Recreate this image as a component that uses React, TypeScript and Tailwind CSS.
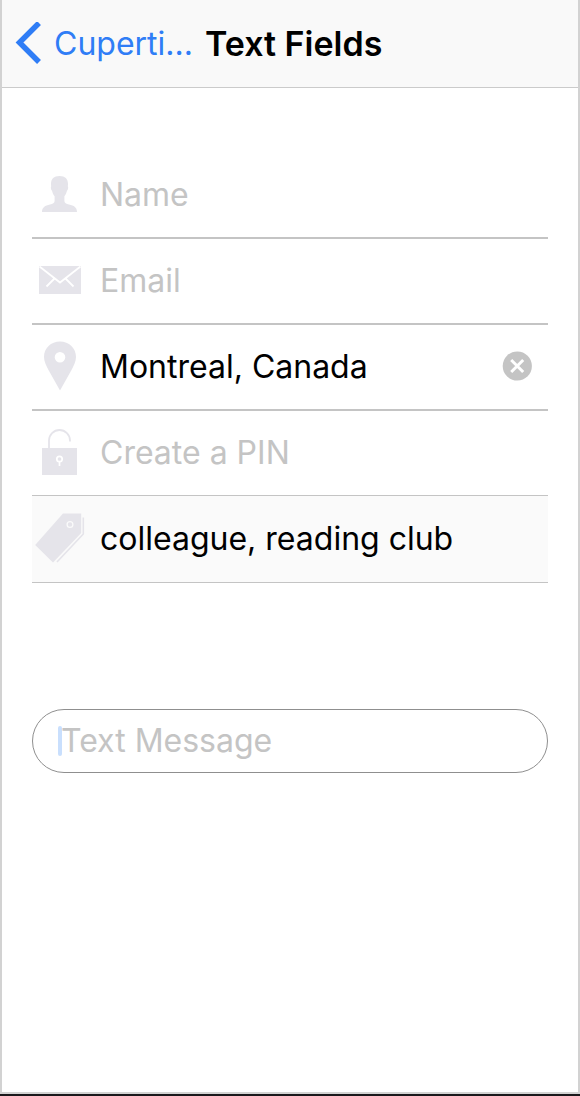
import { useState } from "react";
import type { ReactNode } from "react";

type FieldProps = {
  id: string;
  label: string;
  icon: ReactNode;
  initial?: string;
  clearable?: boolean;
  readOnly?: boolean;
  type?: string;
};

function PersonIcon() {
  return (
    <svg aria-hidden="true" viewBox="0 1 56 56" className="size-14 fill-[#e5e4ea]">
      <path d="M27.500 10c5.600 0 8.500 2.700 8.500 8 0 .800-.100 1.600-.200 2.200.700.700.400 3.300-.800 4.500-.700 2.500-1.500 4.200-2.600 5.600v4.600c0 2 1.800 3 4.600 3.600 5 .900 8 3 8 7.500H10c0-4.500 3-6.600 8-7.500 2.800-.600 4.600-1.600 4.600-3.600v-4.600c-1.100-1.400-1.900-3.100-2.600-5.600-1.200-1.200-1.500-3.800-.800-4.500-.100-.600-.200-1.400-.200-2.200 0-5.300 2.900-8 8.500-8z" />
    </svg>
  );
}

function MailIcon() {
  return (
    <svg aria-hidden="true" viewBox="0 1 56 56" className="size-14">
      <rect x="7" y="14" width="42" height="28" fill="#e5e4ea" />
      <path d="M7.500 14.500 28 30.500 48.500 14.500M14.500 34.500 22.500 26.500M41.500 34.500 33.500 26.500" fill="none" stroke="#fff" strokeWidth="1.800" />
    </svg>
  );
}

function PinIcon() {
  return (
    <svg aria-hidden="true" viewBox="0 1 56 56" className="size-14">
      <path
        fillRule="evenodd"
        fill="#e5e4ea"
        d="M28 3.500c9 0 16 6.700 16 15.500 0 4.500-2.200 8.800-4.500 13L28 52.500 16.500 32C14.200 27.800 12 23.500 12 19 12 10.200 19 3.500 28 3.500zm0 10.500a5.300 5.300 0 1 0 0 10.600 5.300 5.300 0 0 0 0-10.600z"
      />
    </svg>
  );
}

function LockIcon() {
  return (
    <svg aria-hidden="true" viewBox="0 2 56 56" className="size-14">
      <rect x="10" y="25" width="35" height="27" fill="#e5e4ea" />
      <path d="M17 25.500V17.500a10.500 10.500 0 0 1 21 0v1" fill="none" stroke="#e5e4ea" strokeWidth="1.800" />
      <circle cx="27.500" cy="36" r="2.700" fill="none" stroke="#fff" strokeWidth="1.700" />
      <path d="M27.500 38.500V43" stroke="#fff" strokeWidth="1.700" />
    </svg>
  );
}

function TagIcon() {
  return (
    <svg aria-hidden="true" viewBox="0 2 56 56" className="size-14">
      <path d="M31 4.500h18.200v19.500L21 53.500 3.200 36z" fill="#e5e4ea" />
      <circle cx="38" cy="15.500" r="2.900" fill="none" stroke="#fafafa" strokeWidth="1.300" />
      <path d="M51.300 8.500v16.500L25 53" fill="none" stroke="#e5e4ea" strokeWidth="1.600" />
    </svg>
  );
}

function Field({ id, label, icon, initial = "", clearable, readOnly, type = "text" }: FieldProps) {
  const [value, setValue] = useState(initial);
  return (
    <div className="flex h-full items-center">
      <label htmlFor={id} className="flex shrink-0">
        {icon}
      </label>
      <input
        id={id}
        aria-label={label}
        type={type}
        value={value}
        readOnly={readOnly}
        placeholder={label}
        onChange={(e) => setValue(e.target.value)}
        className="ml-3 h-12 min-w-0 flex-1 bg-transparent text-[32px] text-black outline-none placeholder:text-[#c4c4c4]"
      />
      {clearable && value !== "" && (
        <button type="button" aria-label={"Clear " + label} onClick={() => setValue("")} className="mr-4 shrink-0">
          <svg aria-hidden="true" viewBox="0 0 30 32" className="h-8 w-[30px]">
            <circle cx="15.300" cy="15" r="14.600" fill="#c4c4c4" />
            <path d="M9.200 9 21.200 21M21.200 9 9.200 21" stroke="#fff" strokeWidth="3" />
          </svg>
        </button>
      )}
    </div>
  );
}

export default function App() {
  const [message, setMessage] = useState("");
  return (
    <div className="flex min-h-screen flex-col border-b-2 border-[#1a181b] bg-white font-['Inter','Liberation_Sans',sans-serif]">
      <div className="flex flex-1 flex-col border-x-2 border-b-2 border-[#d2d2d2]">
        <header className="flex h-22 items-center border-b border-[#cbcbcb] bg-[#f9f9f9] pl-3">
          <a href="#cupertino" className="flex items-center text-[32px] text-[#2f7df6]">
            <svg aria-hidden="true" viewBox="0 2 28 44" className="mr-3 h-11 w-7">
              <path d="M25 3 5.500 22.500 25 42" fill="none" stroke="currentColor" strokeWidth="5.500" />
            </svg>
            Cuperti...
          </a>
          <h1 className="ml-3 text-[34px] font-semibold text-black">Text Fields</h1>
        </header>
        <main className="px-[30px] pt-16">
          <form onSubmit={(e) => e.preventDefault()}>
            <div className="h-[87px] border-b-2 border-[#c4c4c4]">
              <Field id="name" label="Name" icon={<PersonIcon />} />
            </div>
            <div className="h-[86px] border-b-2 border-[#c4c4c4]">
              <Field id="email" label="Email" type="email" icon={<MailIcon />} />
            </div>
            <div className="h-[86px] border-b-2 border-[#c4c4c4]">
              <Field id="location" label="Location" initial="Montreal, Canada" clearable icon={<PinIcon />} />
            </div>
            <div className="h-[85px] border-b border-[#c4c4c4]">
              <Field id="pin" label="Create a PIN" type="password" icon={<LockIcon />} />
            </div>
            <div className="h-[87px] border-b border-[#c4c4c4] bg-[#fafafa]">
              <Field id="tags" label="Tags" initial="colleague, reading club" readOnly icon={<TagIcon />} />
            </div>
            <div className="relative mt-[126px] flex h-16 items-center rounded-full border border-[#8f8f8f] px-6">
              {message === "" && <span aria-hidden="true" className="absolute left-[25px] h-[30px] w-1 rounded-full bg-[#c9dffd]" />}
              <input
                aria-label="Text Message"
                placeholder="Text Message"
                value={message}
                onChange={(e) => setMessage(e.target.value)}
                className="relative h-12 w-full bg-transparent pl-1 text-[32px] text-black outline-none placeholder:text-[#c4c4c4]"
              />
            </div>
          </form>
        </main>
      </div>
    </div>
  );
}
